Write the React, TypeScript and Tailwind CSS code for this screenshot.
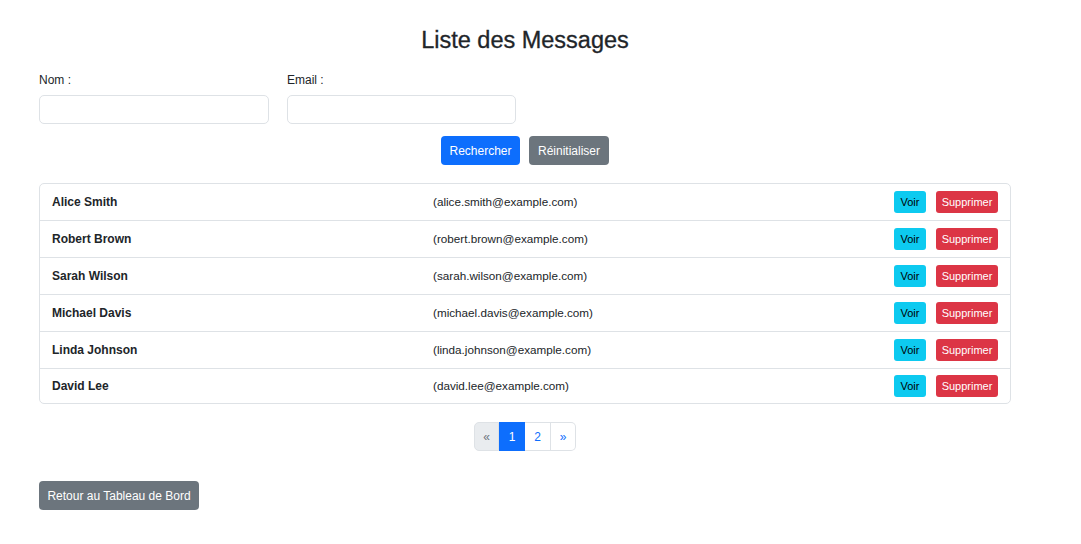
import React from "react";

const messages = [
  { name: "Alice Smith", email: "alice.smith@example.com" },
  { name: "Robert Brown", email: "robert.brown@example.com" },
  { name: "Sarah Wilson", email: "sarah.wilson@example.com" },
  { name: "Michael Davis", email: "michael.davis@example.com" },
  { name: "Linda Johnson", email: "linda.johnson@example.com" },
  { name: "David Lee", email: "david.lee@example.com" },
];

export default function App() {
  return (
    <div
      className="min-h-[544px] bg-white text-[#212529]"
      style={{ fontFamily: '"Liberation Sans", Arial, sans-serif' }}
    >
      <div className="w-[972px] ml-[39px] pt-[25px]">
        <h3 className="text-center text-[23.5px] font-medium leading-[30px] mb-[17px] [-webkit-text-stroke:0.3px_#212529]">
          Liste des Messages
        </h3>

        <div className="flex gap-[18px]">
          <div className="w-[230px]">
            <label className="block text-[12px] leading-[16px] mb-[7px]">Nom :</label>
            <input className="w-full h-[29px] border border-[#dee2e6] rounded-[5px]" />
          </div>
          <div className="w-[229px]">
            <label className="block text-[12px] leading-[16px] mb-[7px]">Email :</label>
            <input className="w-full h-[29px] border border-[#dee2e6] rounded-[5px]" />
          </div>
        </div>

        <div className="flex justify-center gap-[9px] mt-[12px]">
          <button className="w-[79px] h-[29px] rounded-[4px] bg-[#0d6efd] text-white text-[12px]">
            Rechercher
          </button>
          <button className="w-[80px] h-[29px] rounded-[4px] bg-[#6c757d] text-white text-[12px]">
            Réinitialiser
          </button>
        </div>

        <div className="mt-[18px] border border-[#dee2e6] rounded-[5px]">
          {messages.map((m, i) => (
            <div
              key={m.name}
              className={
                "flex items-center px-[12px] " +
                (i < messages.length - 1 ? "h-[37px] border-b border-[#dee2e6]" : "h-[34px]")
              }
            >
              <div className="w-[381px] font-bold text-[12px]">{m.name}</div>
              <div className="flex-1 text-[11.7px]">({m.email})</div>
              <div className="flex gap-[10px]">
                <button className="w-[32px] h-[22px] rounded-[3px] bg-[#0dcaf0] text-black text-[11px]">
                  Voir
                </button>
                <button className="w-[62px] h-[22px] rounded-[3px] bg-[#dc3545] text-white text-[11px]">
                  Supprimer
                </button>
              </div>
            </div>
          ))}
        </div>

        <div className="flex justify-center mt-[18px]">
          <div className="flex h-[29px] text-[12px]">
            <span className="w-[25px] flex items-center justify-center bg-[#e9ecef] text-[#6c757d] border border-[#dee2e6] rounded-l-[5px]">
              «
            </span>
            <span className="w-[26px] flex items-center justify-center bg-[#0d6efd] text-white border border-[#0d6efd]">
              1
            </span>
            <span className="w-[26px] flex items-center justify-center text-[#0d6efd] border-y border-r border-[#dee2e6]">
              2
            </span>
            <span className="w-[25px] flex items-center justify-center text-[#0d6efd] border-y border-r border-[#dee2e6] rounded-r-[5px]">
              »
            </span>
          </div>
        </div>

        <div className="mt-[30px]">
          <button className="w-[160px] h-[29px] rounded-[4px] bg-[#6c757d] text-white text-[12px]">
            Retour au Tableau de Bord
          </button>
        </div>
      </div>
    </div>
  );
}
